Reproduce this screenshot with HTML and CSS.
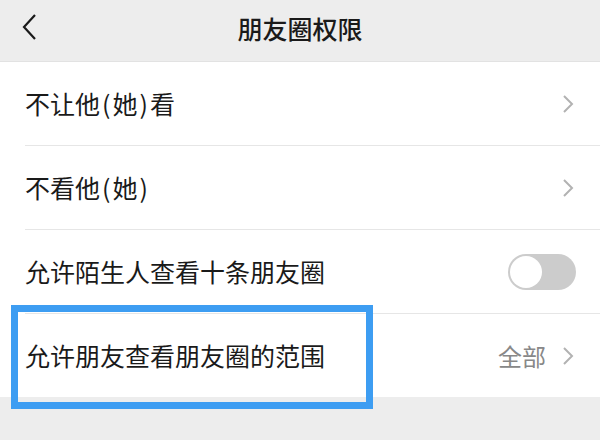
FILE: index.html
```html
<!DOCTYPE html>
<html lang="zh">
<head>
<meta charset="utf-8">
<link rel="stylesheet" href="styles.css">
</head>
<body>
<div class="page">
  <header class="nav">
    <svg class="back" width="16" height="28" viewBox="0 0 16 28"><path d="M14 2 L3 14 L14 26" fill="none" stroke="#1a1a1a" stroke-width="2.2" stroke-linejoin="miter"/></svg>
    <div class="title">朋友圈权限</div>
  </header>
  <div class="list">
    <div class="row"><div class="inner"><span class="label">不让他<span class="p">(</span>她<span class="p">)</span>看</span><span class="right"><svg class="chev" width="12" height="20" viewBox="0 0 12 20"><path d="M2 2 L10 10 L2 18" fill="none" stroke="#b2b2b2" stroke-width="2"/></svg></span></div></div>
    <div class="row"><div class="inner"><span class="label">不看他<span class="p">(</span>她<span class="p">)</span></span><span class="right"><svg class="chev" width="12" height="20" viewBox="0 0 12 20"><path d="M2 2 L10 10 L2 18" fill="none" stroke="#b2b2b2" stroke-width="2"/></svg></span></div></div>
    <div class="row"><div class="inner"><span class="label">允许陌生人查看十条朋友圈</span><span class="right"><span class="toggle"><span class="knob"></span></span></span></div></div>
    <div class="row last"><div class="inner"><span class="label">允许朋友查看朋友圈的范围</span><span class="right"><span class="value">全部</span><svg class="chev" width="12" height="20" viewBox="0 0 12 20"><path d="M2 2 L10 10 L2 18" fill="none" stroke="#b2b2b2" stroke-width="2"/></svg></span></div></div>
  </div>
  <div class="highlight"></div>
</div>
</body>
</html>
```
FILE: styles.css
```css
html, body {
  margin: 0;
  padding: 0;
}
body {
  background: #ededed;
  font-family: "Noto Sans CJK SC", "Noto Sans", sans-serif;
  color: #1a1a1a;
}
.page {
  position: relative;
  width: 600px;
  height: 440px;
  overflow: hidden;
  background: #ededed;
}
.nav {
  position: relative;
  height: 62px;
  display: flex;
  align-items: center;
  justify-content: center;
  background: #ededed;
  border-bottom: 1px solid #e2e2e2;
  box-sizing: border-box;
}
.back {
  position: absolute;
  left: 21px;
  top: 13px;
}
.title {
  font-size: 25px;
  font-weight: 500;
  color: #1a1a1a;
  line-height: 1;
  margin-top: -4px;
}
.list {
  background: #fff;
}
.row {
  height: 84px;
  padding-left: 25px;
}
.row.last {
  height: 83px;
}
.inner {
  height: 100%;
  display: flex;
  align-items: center;
  justify-content: space-between;
  border-bottom: 1px solid #e6e6e6;
  box-sizing: border-box;
  padding-right: 26px;
}
.row.last .inner {
  border-bottom: none;
}
.label {
  font-size: 25px;
  line-height: 1;
  color: #1a1a1a;
}
.p {
  margin: 0 2px;
}
.right {
  display: flex;
  align-items: center;
}
.chev {
  display: block;
}
.value {
  font-size: 24px;
  color: #888;
  line-height: 1;
  margin-right: 16px;
}
.toggle {
  width: 68px;
  height: 36px;
  border-radius: 18px;
  background: #cccccc;
  margin-right: -2px;
  position: relative;
  display: block;
}
.knob {
  position: absolute;
  left: 2px;
  top: 2px;
  width: 32px;
  height: 32px;
  border-radius: 50%;
  background: #fff;
}
.highlight {
  position: absolute;
  left: 11px;
  top: 305px;
  width: 362px;
  height: 104px;
  border: 7px solid #3d9df2;
  box-sizing: border-box;
}
```
